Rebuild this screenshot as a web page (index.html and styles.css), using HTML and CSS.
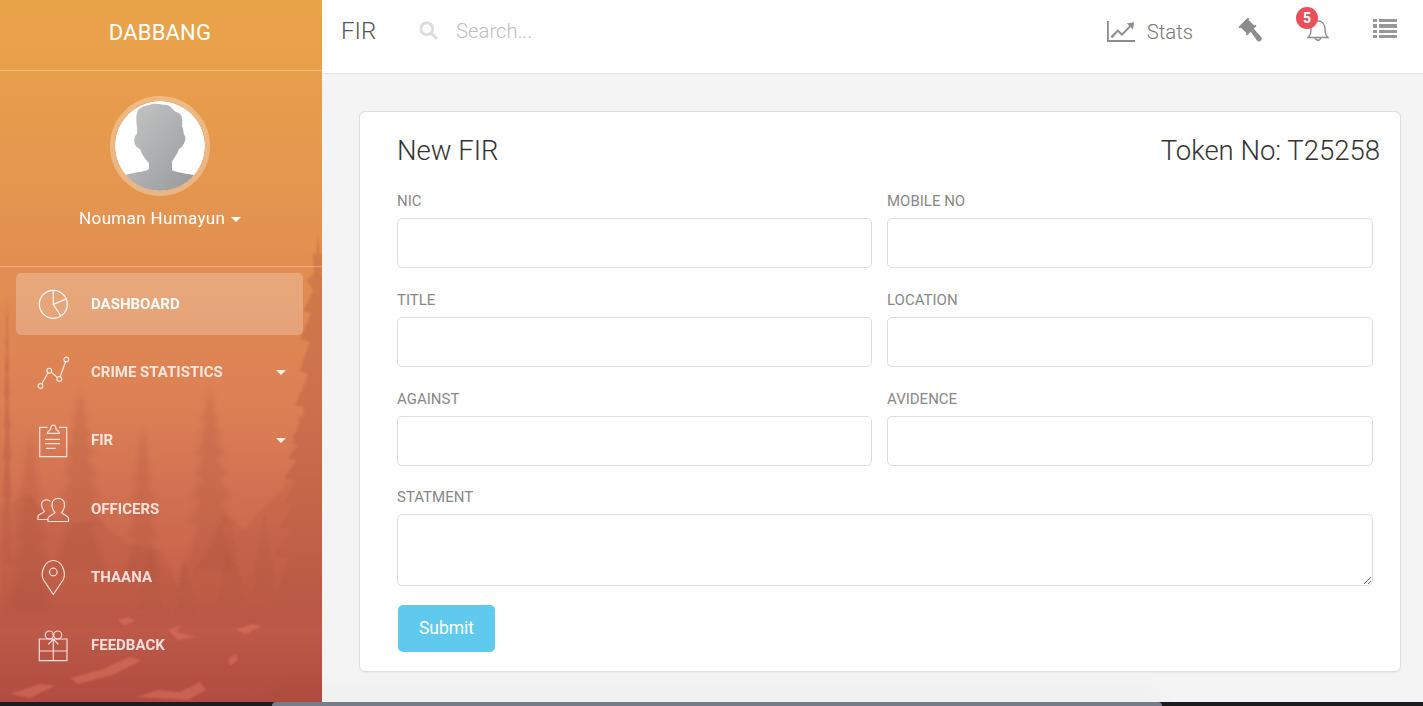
FILE: index.html
```html
<!DOCTYPE html>
<html lang="en">
<head>
<meta charset="utf-8">
<title>FIR</title>
<link rel="stylesheet" href="styles.css">
</head>
<body>
<div class="app">
  <aside class="sidebar">
    <svg class="forest" viewBox="0 0 322 702" preserveAspectRatio="none" aria-hidden="true">
      <defs>
        <filter id="soft" x="-20%" y="-20%" width="140%" height="140%"><feGaussianBlur stdDeviation="1.300"/></filter>
        <filter id="softer" x="-20%" y="-20%" width="140%" height="140%"><feGaussianBlur stdDeviation="2.500"/></filter>
        <path id="tree" d="M50 0 L53 24 L60 22 L55 44 L68 50 L58 62 L74 82 L61 86 L80 112 L64 116 L72 132 L88 146 L68 150 L92 182 L72 186 L96 224 L76 228 L100 300 L0 300 L26 226 L6 222 L30 186 L12 182 L34 150 L20 146 L36 116 L20 112 L38 86 L26 82 L42 62 L32 50 L44 44 L41 22 L47 24 Z"/>
      </defs>
      <g filter="url(#softer)" fill="#a8503a" opacity=".22">
        <use href="#tree" transform="translate(55 385) scale(.5 .62)"/>
        <use href="#tree" transform="translate(185 385) scale(.5 .62)"/>
        <use href="#tree" transform="translate(125 425) scale(.35 .5)"/>
        <use href="#tree" transform="translate(10 430) scale(.4 .6)"/>
      </g>
      <g filter="url(#soft)" fill="#a8503a" opacity=".3">
        <use href="#tree" transform="translate(288 232) scale(.6 .95)"/>
        <use href="#tree" transform="translate(270 400) scale(.7 .7)"/>
        <use href="#tree" transform="translate(2 295) scale(.1 .9)"/>
        <path d="M0 505 L30 495 L60 525 L100 520 L130 545 L160 550 L180 590 L205 555 L225 515 L245 530 L270 500 L300 470 L322 480 V625 L0 625 Z" opacity=".55"/>
        <use href="#tree" transform="translate(135 545) scale(.3 .22)"/>
        <use href="#tree" transform="translate(215 520) scale(.3 .28)"/>
        <use href="#tree" transform="translate(250 510) scale(.28 .3)"/>
        <use href="#tree" transform="translate(172 560) scale(.25 .18)"/>
      </g>
      <g filter="url(#soft)" fill="#e8806a" opacity=".42">
        <path d="M168 630 L182 625 L176 632 L196 637 L178 640 Z"/>
        <path d="M70 678 L100 670 L130 657 L142 660 L115 674 L78 684 Z"/>
        <path d="M136 697 L158 690 L180 692 L200 682 L206 690 L188 700 Z"/>
        <path d="M235 630 L252 624 L262 626 L246 634 Z"/>
        <path d="M118 620 L128 617 L136 621 L124 625 Z"/>
        <path d="M228 660 L236 654 L238 660 L230 666 Z"/>
        <path d="M10 694 L40 684 L55 686 L30 698 Z"/>
      </g>
    </svg>
    <div class="brand">DABBANG</div>
    <div class="user">
      <div class="avatar">
        <svg viewBox="0 0 90 90" width="90" height="90" aria-hidden="true">
          <defs>
            <linearGradient id="sil" x1="0" y1="0" x2="1" y2="1">
              <stop offset="0" stop-color="#c6c6c6"/>
              <stop offset="1" stop-color="#97999b"/>
            </linearGradient>
          </defs>
          <path fill="url(#sil)" d="M23 9 C26 5 32 5 37 3 C43 2 48 4 52 4 C56 5 58 9 61 11 C67 12 68 18 67 25 C69 29 68 33 70 35 C71 39 69 45 64 48 C62 54 58 58 57 61 V69 C60 71 67 72 79 74 C73 84 60 90 45 90 C30 90 16 84 10 74 C20 71 31 71 34 68 V62 C30 58 27 54 25 48 C20 46 18 41 20 35 C23 33 22 30 22 26 C21 19 21 13 23 9 Z"/>
        </svg>
      </div>
      <div class="user-name">Nouman Humayun <span class="caret user-caret"></span></div>
    </div>
    <nav class="nav">
      <a class="nav-item active">
        <svg class="nav-icon" viewBox="0 0 32 32"><circle cx="16.3" cy="16.3" r="14"/><path d="M16.3 2.3V16.3L28.7 11.3M16.3 16.3L24 28.3"/></svg>
        <span>DASHBOARD</span>
      </a>
      <a class="nav-item">
        <svg class="nav-icon" viewBox="0 0 32 32"><circle cx="3.5" cy="30" r="2.4"/><circle cx="12.3" cy="14.7" r="2.4"/><circle cx="22.3" cy="23" r="2.4"/><circle cx="29.3" cy="3.5" r="2.4"/><path d="M4.7 28L11.1 16.8M14.2 16.2L20.4 21.5M23.1 20.8L28.5 5.8"/></svg>
        <span>CRIME STATISTICS</span>
        <span class="caret nav-caret"></span>
      </a>
      <a class="nav-item">
        <svg class="nav-icon" viewBox="0 0 32 32"><path d="M10.5 3.3H2.7V32.7H29.7V3.3H22M10.3 9.3C10.6 7 12.6 6.4 13.6 5.2C13.6 -0.2 19 -0.2 19 5.2C20.2 6.4 22 7 22.3 9.3Z"/><path d="M8 15.3H23M8 19.7H23M9 24.3H18.7"/></svg>
        <span>FIR</span>
        <span class="caret nav-caret"></span>
      </a>
      <a class="nav-item">
        <svg class="nav-icon" viewBox="0 0 32 32"><path d="M11 28.5H31.5V25.5C31.5 22.5 25.5 21.5 24.5 19.5C27 17 27.500 14.500 27.500 11.500C27.500 7.500 24.500 5.300 21.200 5.300C17.900 5.300 15 7.500 15 11.500C15 14.500 15.500 17 18 19.500C17 21.500 11 22.500 11 25.500Z"/><path d="M11 26.500H1V23.500C1 21 6.500 20.500 7.500 18.500C5 16 4.500 14 4.500 11.500C4.500 8.500 7 6.800 9.500 6.800C11 6.800 12.500 7.300 13.500 8.300"/></svg>
        <span>OFFICERS</span>
      </a>
      <a class="nav-item">
        <svg class="nav-icon" viewBox="0 0 32 32"><path d="M16.3 33.500L6.300 18.500C3 11 8 -0.500 16.300 -0.500C24.600 -0.500 29.600 11 26.300 18.500Z"/><circle cx="16.300" cy="11" r="3.800"/></svg>
        <span>THAANA</span>
      </a>
      <a class="nav-item">
        <svg class="nav-icon" viewBox="0 0 32 32"><path d="M2.300 10H30V31.700H2.300ZM2.300 22H30M16.300 10V31.700M16.300 10L11.300 15.300M16.300 10L21.300 15.300"/><circle cx="12.300" cy="6" r="4"/><circle cx="20.700" cy="6" r="4"/></svg>
        <span>FEEDBACK</span>
      </a>
    </nav>
  </aside>
  <div class="main">
    <header class="topbar">
      <div class="page-title">FIR</div>
      <svg class="search-icon" viewBox="0 0 20 20" aria-hidden="true"><circle cx="8.200" cy="8.200" r="6.200"/><path d="M12.800 12.800L18 18"/></svg>
      <input class="search" type="text" placeholder="Search...">
      <div class="top-actions">
        <div class="stats">
          <svg width="28" height="21" viewBox="0 0 28 21" fill="#8c8c8c" aria-hidden="true"><path d="M0 0H1.800V19H28V21H0Z"/><path d="M3.500 15.500L10.800 8.200L15 12.200L22.300 4.800L19.800 2.400L27 1.200L26 8.400L23.700 6.100L15 15L10.800 11L5.200 17.200Z"/></svg>
          <span>Stats</span>
        </div>
        <svg class="gavel" width="24" height="24" viewBox="0 0 24 24" fill="#8c8c8c" aria-hidden="true"><path d="M0.500 10.500L10.500 0.500L12 2L11 3L17 9L18 8L19.500 9.500L9.500 19.500L8 18L9 17L3 11L2 12Z" transform="translate(0 -1) scale(.95)"/><path d="M12.500 13.500L15.500 10.500L23 18.800C24.200 20.200 23.800 21.700 22.800 22.700C21.800 23.700 20.200 23.800 19 22.600Z"/></svg>
        <div class="bell">
          <svg width="22" height="23" viewBox="0 0 22 23" fill="none" stroke="#8c8c8c" stroke-width="1.400" aria-hidden="true"><path d="M1 19.500C3.500 17.500 4 14.500 4 11C4 6 7 3 11 3C15 3 18 6 18 11C18 14.500 18.500 17.500 21 19.500Z"/><path d="M8.500 19.800C8.500 23 13.500 23 13.500 19.800"/></svg>
          <span class="badge">5</span>
        </div>
        <div class="list-icon"><i></i><b></b><i></i><b></b><i></i><b></b><i></i><b></b></div>
      </div>
    </header>
    <main class="content">
      <section class="card">
        <div class="card-head">
          <h1>New FIR</h1>
          <div class="token">Token No: T25258</div>
        </div>
        <form class="form">
          <label class="field"><span>NIC</span><input type="text"></label>
          <label class="field"><span>MOBILE NO</span><input type="text"></label>
          <label class="field"><span>TITLE</span><input type="text"></label>
          <label class="field"><span>LOCATION</span><input type="text"></label>
          <label class="field"><span>AGAINST</span><input type="text"></label>
          <label class="field"><span>AVIDENCE</span><input type="text"></label>
          <label class="field wide"><span>STATMENT</span><textarea></textarea></label>
        </form>
        <button class="submit" type="button">Submit</button>
      </section>
    </main>
  </div>
</div>
<div class="dock"><div class="dock-bar"></div></div>
</body>
</html>
```
FILE: styles.css
```css
* { box-sizing: border-box; }
html, body { margin: 0; height: 706px; overflow: hidden; }
body { font-family: Roboto, "Liberation Sans", sans-serif; background: #1a1c20; }

.app { display: flex; height: 702px; }

.sidebar {
  position: relative;
  width: 322px;
  flex: none;
  color: #fff;
  background: linear-gradient(180deg, #eaa449 0%, #e39350 32%, #dc7f55 58%, #cb684e 78%, #b04c41 100%);
  overflow: hidden;
}
.forest { position: absolute; inset: 0; width: 100%; height: 100%; }

.brand {
  position: relative;
  height: 71px;
  border-bottom: 1px solid rgba(255,255,255,.3);
  display: flex;
  align-items: center;
  justify-content: center;
  font-size: 22px;
  letter-spacing: .2px;
  padding: 0 2px 6px 0;
}
.user {
  position: relative;
  height: 196px;
  border-bottom: 1px solid rgba(255,255,255,.3);
  padding-top: 25px;
  display: flex;
  flex-direction: column;
  align-items: center;
}
.avatar {
  width: 100px;
  height: 100px;
  margin-right: 2px;
  border-radius: 50%;
  border: 5px solid rgba(255,255,255,.3);
  background-clip: padding-box;
  overflow: hidden;
}
.avatar svg { display: block; background: #fff; border-radius: 50%; }
.user-name { margin: 11px 2px 0 0; font-size: 17px; letter-spacing: .35px; line-height: 22px; }
.caret { display: inline-block; width: 0; height: 0; border-left: 5.500px solid transparent; border-right: 5.500px solid transparent; border-top: 5px solid #fff; }
.user-caret { margin-left: 1px; vertical-align: 2px; }

.nav { position: relative; padding: 6px 19px 0 16px; }
.nav-item {
  display: flex;
  align-items: center;
  height: 62px;
  margin-bottom: 6.200px;
  padding: 0 17px 0 21px;
  border-radius: 5px;
  font-size: 15px;
  font-weight: 700;
  color: rgba(255,255,255,.8);
}
.nav-item.active { background: rgba(255,255,255,.23); color: #fff; }
.nav-icon {
  width: 32px;
  height: 32px;
  flex: none;
  margin-right: 22px;
  overflow: visible;
  fill: none;
  stroke: currentColor;
  stroke-width: 1.200;
}
.nav-caret { margin-left: auto; border-top-color: rgba(255,255,255,.85); }

.main { flex: 1; display: flex; flex-direction: column; background: #f4f4f4; min-width: 0; }

.topbar {
  height: 74px;
  flex: none;
  background: #fff;
  border-bottom: 1px solid #e4e4e4;
  display: flex;
  align-items: center;
  padding: 0 26px 12px 19px;
}
.page-title { font-size: 24px; font-weight: 300; color: #555; width: 78px; padding-top: 1px; }
.search-icon { width: 19px; height: 19px; fill: none; stroke: #dcdcdc; stroke-width: 3; stroke-linecap: round; flex: none; }
.search {
  border: 0;
  outline: 0;
  margin: 1px 0 0 18px;
  padding: 0;
  width: 300px;
  font: 300 20.300px Roboto, sans-serif;
  background: transparent;
}
.search::placeholder { color: #c0c0c0; opacity: 1; }
.top-actions { margin-left: auto; display: flex; align-items: center; }
.stats { display: flex; align-items: center; gap: 12px; font-size: 20.300px; font-weight: 300; color: #777; margin-top: 3px; }
.stats svg { margin-top: -2px; }
.gavel { margin-left: 45px; margin-top: -2px; }
.bell { position: relative; margin: -3px 0 0 45px; width: 22px; height: 23px; }
.bell svg { display: block; }
.badge {
  position: absolute;
  left: -11px;
  top: -11px;
  width: 22px;
  height: 22px;
  border-radius: 50%;
  background: #ea5058;
  color: #fff;
  font-size: 14px;
  font-weight: 700;
  line-height: 22px;
  text-align: center;
}
.list-icon {
  margin-left: 44px;
  width: 24px;
  display: grid;
  grid-template-columns: 4px 1fr;
  column-gap: 2px;
  row-gap: 2px;
  margin-top: -4px;
}
.list-icon i, .list-icon b { height: 3.300px; background: #999; display: block; }

.content { flex: 1; padding: 37px 22px 0 37px; min-height: 0; }
.card {
  height: 561px;
  background: #fff;
  border: 1px solid #ddd;
  border-radius: 6px;
  box-shadow: 0 1px 2px rgba(0,0,0,.05);
  padding: 18px 27px 0 37px;
}
.card-head { display: flex; justify-content: space-between; align-items: center; height: 40px; margin: 0 -7px 21px 0; }
.card-head h1 { margin: 0; font-size: 27.500px; font-weight: 300; color: #333; }
.token { font-size: 27.500px; font-weight: 300; color: #333; }

.form { display: grid; grid-template-columns: 475px 486px; column-gap: 15px; row-gap: 22px; }
.field { display: block; }
.field span { display: block; height: 20px; line-height: 20px; margin-bottom: 7px; font-size: 15px; color: #888; }
.field input, .field textarea {
  display: block;
  width: 100%;
  height: 50px;
  border: 1px solid #ddd;
  border-radius: 5px;
  background: #fff;
  outline: 0;
  padding: 6px 12px;
}
.field.wide { grid-column: 1 / -1; margin-top: -1px; }
.field textarea { height: 72px; resize: vertical; }

.submit {
  display: block;
  margin: 19px 0 0 1px;
  width: 97px;
  height: 47px;
  padding: 0 0 2px;
  border: 0;
  border-radius: 5px;
  background: #5fcaee;
  color: #fff;
  font: 400 17.500px Roboto, sans-serif;
}

.dock { height: 4px; background: #1a1c20; position: relative; }
.dock-bar {
  margin-left: 272px;
  width: 890px;
  height: 4px;
  background: #767d8a;
  border-radius: 4px 4px 0 0;
  box-shadow: 0 -6px 26px rgba(0,0,0,.12);
}
```
